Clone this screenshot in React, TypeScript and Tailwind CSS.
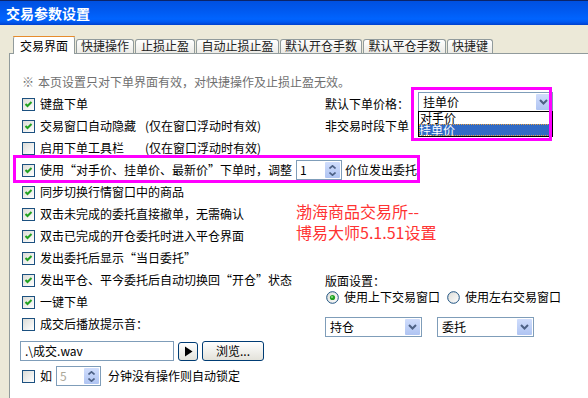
import React from 'react';

const Check: React.FC<{ checked?: boolean }> = ({ checked }) => (
  <span className="flex h-[13px] w-[13px] shrink-0 items-center justify-center border border-[#1C5180] bg-gradient-to-br from-[#DCDCD7] to-white">
    {checked && (
      <svg width="11" height="11" viewBox="0 0 11 11">
        <polyline points="2.5,5 4.5,7 8.5,3" fill="none" stroke="#21A121" strokeWidth="2" />
      </svg>
    )}
  </span>
);

const Radio: React.FC<{ checked?: boolean }> = ({ checked }) => (
  <svg width="13" height="13" viewBox="0 0 13 13" className="shrink-0">
    <defs>
      <linearGradient id="rg" x1="0" y1="0" x2="1" y2="1">
        <stop offset="0" stopColor="#DCDCD7" />
        <stop offset="1" stopColor="#FFFFFF" />
      </linearGradient>
    </defs>
    <circle cx="6.5" cy="6.5" r="5.8" fill="url(#rg)" stroke="#1C5180" strokeWidth="1" />
    {checked && <circle cx="6.5" cy="6.5" r="2.6" fill="#21A121" />}
    {checked && <circle cx="6" cy="6" r="1" fill="#8BE08B" />}
  </svg>
);

const Chevron: React.FC = () => (
  <svg width="9" height="6" viewBox="0 0 9 6">
    <polyline points="1,1 4.5,4.5 8,1" fill="none" stroke="#4D6185" strokeWidth="2" />
  </svg>
);

const DropButton: React.FC = () => (
  <span className="m-px flex w-[15px] shrink-0 items-center justify-center rounded-[1px] bg-gradient-to-b from-[#D0DDFC] to-[#AFC4F2]">
    <Chevron />
  </span>
);

const Combo: React.FC<{ value: string; className: string; children?: React.ReactNode }> = ({ value, className, children }) => (
  <div className={`relative flex h-[20px] shrink-0 border border-[#7F9DB9] bg-white ${className}`}>
    <span className="flex-1 pl-[4px] leading-[18px]">{value}</span>
    <DropButton />
    {children}
  </div>
);

const Spin: React.FC<{ value: string; disabled?: boolean; className: string }> = ({ value, disabled, className }) => (
  <div className={`flex h-[20px] shrink-0 border border-[#7F9DB9] bg-white ${className}`}>
    <span className={`flex-1 pl-[3px] leading-[18px] ${disabled ? 'text-[#ACA899]' : 'text-black'}`}>{value}</span>
    <span className="m-px flex w-[15px] flex-col items-center justify-center gap-[3px] rounded-[1px] bg-gradient-to-b from-[#D0DDFC] to-[#AFC4F2]">
      <svg width="7" height="4" viewBox="0 0 7 4">
        <polyline points="0.5,3.5 3.5,0.8 6.5,3.5" fill="none" stroke="#4D6185" strokeWidth="1.6" />
      </svg>
      <svg width="7" height="4" viewBox="0 0 7 4">
        <polyline points="0.5,0.5 3.5,3.2 6.5,0.5" fill="none" stroke="#4D6185" strokeWidth="1.6" />
      </svg>
    </span>
  </div>
);

const Row: React.FC<{ checked?: boolean; children: React.ReactNode; className?: string }> = ({ checked, children, className = '' }) => (
  <div className={`flex h-[22px] items-center gap-[5px] ${className}`}>
    <Check checked={checked} />
    {children}
  </div>
);

const tabs = [
  { label: '快捷操作', w: 'w-[58px]' },
  { label: '止损止盈', w: 'w-[60px]' },
  { label: '自动止损止盈', w: 'w-[83px]' },
  { label: '默认开仓手数', w: 'w-[82px]' },
  { label: '默认平仓手数', w: 'w-[83px]' },
  { label: '快捷键', w: 'w-[46px]' },
];

const App: React.FC = () => {
  return (
    <div className="flex h-[398px] w-[588px] flex-col overflow-hidden bg-[#ECE9D8] font-['Noto_Sans_CJK_SC','Liberation_Sans',sans-serif] text-[12px] text-black">
      {/* title bar */}
      <div className="flex h-[25px] shrink-0 items-center border-t border-[#0A246A] bg-[linear-gradient(to_bottom,#0050E0_0%,#0058EE_35%,#0064FF_75%,#0058F0_88%,#0040CC_100%)] pl-[6px] text-[14px] font-bold text-white">
        交易参数设置
      </div>

      <div className="flex flex-1 flex-col pl-[9px] pt-[11px]">
        {/* tabs */}
        <div className="flex h-[17px] items-end pl-[4px]">
          <div className="relative z-10 -mb-px mr-px flex h-[18px] w-[62px] flex-col rounded-t-[3px] border-x border-[#919B9C] bg-white">
            <div className="-mx-px h-[3px] rounded-t-[3px] border-t border-[#E68B2C] bg-[#FFC83C]" />
            <div className="flex flex-1 items-center justify-center pb-[3px]">交易界面</div>
          </div>
          {tabs.map((t) => (
            <div
              key={t.label}
              className={`mr-px flex h-[14px] items-center justify-center rounded-t-[3px] border-x border-t border-[#919B9C] bg-gradient-to-b from-white to-[#ECEBE6] pb-[1px] text-[#222] ${t.w}`}
            >
              {t.label}
            </div>
          ))}
        </div>

        {/* panel */}
        <div className="flex flex-1 flex-col border-l border-t border-[#919B9C] bg-white pl-[12px] pt-[17px]">
          <div className="flex h-[22px] items-center text-[#707070]">
            <span className="mr-[4px]">※</span>本页设置只对下单界面有效，对快捷操作及止损止盈无效。
          </div>

          {/* block A */}
          <div className="flex">
            <div className="flex w-[303px] flex-col">
              <Row checked>键盘下单</Row>
              <Row checked>
                <span className="w-[100px]">交易窗口自动隐藏</span>
                <span>(仅在窗口浮动时有效)</span>
              </Row>
              <Row>
                <span className="w-[100px]">启用下单工具栏</span>
                <span>(仅在窗口浮动时有效)</span>
              </Row>
            </div>
            <div className="flex flex-col">
              <div className="flex h-[22px] items-center">
                <span>默认下单价格：</span>
                <Combo value="挂单价" className="-mt-[4px] ml-[9px] w-[135px]">
                  <div className="absolute left-[-1px] top-[18px] z-20 w-[135px] border border-black bg-white">
                    <div className="h-[12px] pl-px leading-[12px]">对手价</div>
                    <div className="h-[12px] bg-[#316AC5] leading-[12px] text-white outline-1 -outline-offset-1 outline-dotted outline-[#E8A040]">
                      挂单价
                    </div>
                  </div>
                  <div className="pointer-events-none absolute left-[-8px] top-[-6px] z-30 h-[54px] w-[141px] border-[3px] border-[#FF00FF]" />
                </Combo>
              </div>
              <div className="flex h-[22px] items-center">非交易时段下单</div>
            </div>
          </div>

          {/* highlighted row */}
          <div className="relative">
            <Row checked>
              <span>使用“对手价、挂单价、最新价”下单时，调整</span>
              <Spin value="1" className="-ml-px w-[46px]" />
              <span className="-ml-[2px]">价位发出委托</span>
            </Row>
            <div className="pointer-events-none absolute left-[-9px] top-[-4px] h-[28px] w-[407px] border-[3px] border-[#FF00FF]" />
          </div>

          {/* block B */}
          <div className="flex">
            <div className="flex w-[274px] flex-col">
              <Row checked>同步切换行情窗口中的商品</Row>
              <Row checked>双击未完成的委托直接撤单，无需确认</Row>
              <Row checked>双击已完成的开仓委托时进入平仓界面</Row>
              <Row checked>发出委托后显示“当日委托”</Row>
              <Row checked>发出平仓、平今委托后自动切换回“开仓”状态</Row>
              <Row checked>一键下单</Row>
              <Row>成交后播放提示音：</Row>
              <div className="-ml-[2px] mt-[6px] flex h-[20px] items-center">
                <div className="h-[20px] w-[154px] border border-[#7F9DB9] bg-white pl-[4px] leading-[18px]">.\成交.wav</div>
                <div className="ml-[4px] flex h-[19px] w-[20px] items-center justify-center rounded-[3px] border border-[#003C74] bg-gradient-to-b from-white to-[#E3E2DA]">
                  <svg width="9" height="11" viewBox="0 0 9 11">
                    <polygon points="1,0.5 8.5,5.5 1,10.5" fill="#000" />
                  </svg>
                </div>
                <div className="ml-[4px] flex h-[20px] w-[62px] items-center justify-center rounded-[3px] border border-[#003C74] bg-gradient-to-b from-white to-[#E3E2DA]">
                  浏览...
                </div>
              </div>
              <div className="mt-[5px] flex h-[20px] items-center">
                <Check />
                <span className="ml-[5px]">如</span>
                <Spin value="5" disabled className="ml-[4px] w-[45px]" />
                <span className="ml-[7px]">分钟没有操作则自动锁定</span>
              </div>
            </div>
            <div className="flex flex-col">
              <div className="mt-[20px] flex flex-col text-[16px] text-[#FF3333]">
                <div className="h-[21px] leading-[21px]">渤海商品交易所--</div>
                <div className="h-[21px] leading-[21px]">博易大师5.1.51设置</div>
              </div>
              <div className="ml-[29px] mt-[30px] h-[16px] leading-[16px]">版面设置：</div>
              <div className="ml-[30px] flex h-[16px] items-center">
                <Radio checked />
                <span className="ml-[5px]">使用上下交易窗口</span>
                <span className="ml-[7px]">
                  <Radio />
                </span>
                <span className="ml-[5px]">使用左右交易窗口</span>
              </div>
              <div className="ml-[29px] mt-[12px] flex gap-[15px]">
                <Combo value="持仓" className="w-[97px]" />
                <Combo value="委托" className="w-[97px]" />
              </div>
            </div>
          </div>
        </div>
      </div>
    </div>
  );
};

export default App;
